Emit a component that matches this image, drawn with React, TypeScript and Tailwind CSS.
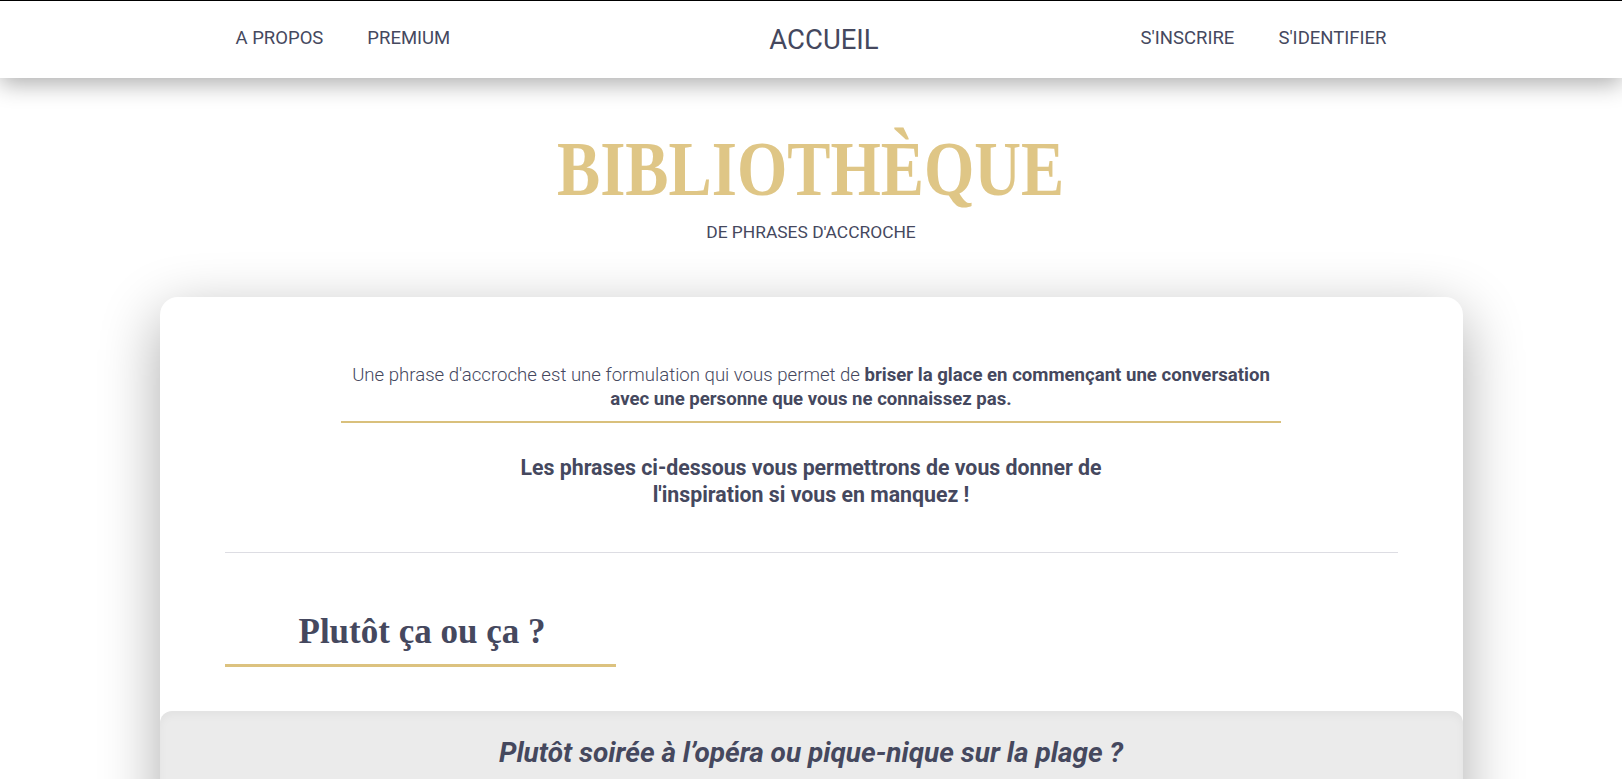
import React from "react";

export default function App() {
  const roboto = { fontFamily: "Roboto, 'Liberation Sans', sans-serif" };
  return (
    <div className="min-h-screen bg-white text-[#45485e]" style={roboto}>
      <nav className="relative z-10 h-[78px] border-t border-black bg-white shadow-[0_6px_22px_rgba(0,0,0,0.32)]">
        <div className="mx-auto grid h-full w-[1151px] grid-cols-3 items-center">
          <div className="flex items-center gap-[44px] pb-[1px] text-[18.5px]">
            <a>A PROPOS</a>
            <a>PREMIUM</a>
          </div>
          <div className="flex justify-center pl-[26px] text-[27.5px]">
            <a>ACCUEIL</a>
          </div>
          <div className="flex items-center justify-end gap-[44px] pb-[1px] text-[18.5px]">
            <a>S'INSCRIRE</a>
            <a>S'IDENTIFIER</a>
          </div>
        </div>
      </nav>

      <header className="flex flex-col items-center">
        <h1
          className="mt-[52px] origin-center scale-x-[0.83] text-[78px] font-bold leading-none text-[#dfc686]"
          style={{ fontFamily: "'Liberation Serif', 'DejaVu Serif', serif" }}
        >
          BIBLIOTHÈQUE
        </h1>
        <p className="mt-[12px] text-[17.4px] leading-[24px]">DE PHRASES D'ACCROCHE</p>
      </header>

      <section className="mx-auto mt-[53px] w-[1303px] overflow-hidden rounded-[18px] bg-white shadow-[0_18px_60px_rgba(0,0,0,0.33)]">
        <div className="px-[65px] pt-[66px]">
          <p className="mx-auto w-[940px] border-b-2 border-[#d9c07c] pb-[10px] text-center text-[18.6px] font-light leading-[24px]">
            Une phrase d'accroche est une formulation qui vous permet de{" "}
            <strong className="font-bold">
              briser la glace en commençant une conversation avec une personne que vous ne connaissez pas.
            </strong>
          </p>
          <p className="mx-auto mt-[31px] w-[640px] text-center text-[21.3px] font-bold leading-[27px]">
            Les phrases ci-dessous vous permettrons de vous donner de l'inspiration si vous en manquez !
          </p>
          <div className="mt-[44px] h-px bg-[#dddde3]" />
          <h2
            className="mt-[57px] w-[391px] border-b-[3px] border-[#dcc27f] pb-[10px] pl-[74px] text-[35px] font-bold leading-[44px]"
            style={{ fontFamily: "'Liberation Serif', 'DejaVu Serif', serif" }}
          >
            Plutôt ça ou ça ?
          </h2>
        </div>
        <div className="mt-[44px] rounded-t-[12px] bg-[#ebebeb] px-[65px] pb-[60px] pt-[25px] shadow-[inset_0_4px_8px_rgba(0,0,0,0.04)]">
          <p className="text-center text-[28px] font-bold italic leading-[34px]">
            Plutôt soirée à l’opéra ou pique-nique sur la plage ?
          </p>
        </div>
      </section>
      <div className="h-[60px]" />
    </div>
  );
}
